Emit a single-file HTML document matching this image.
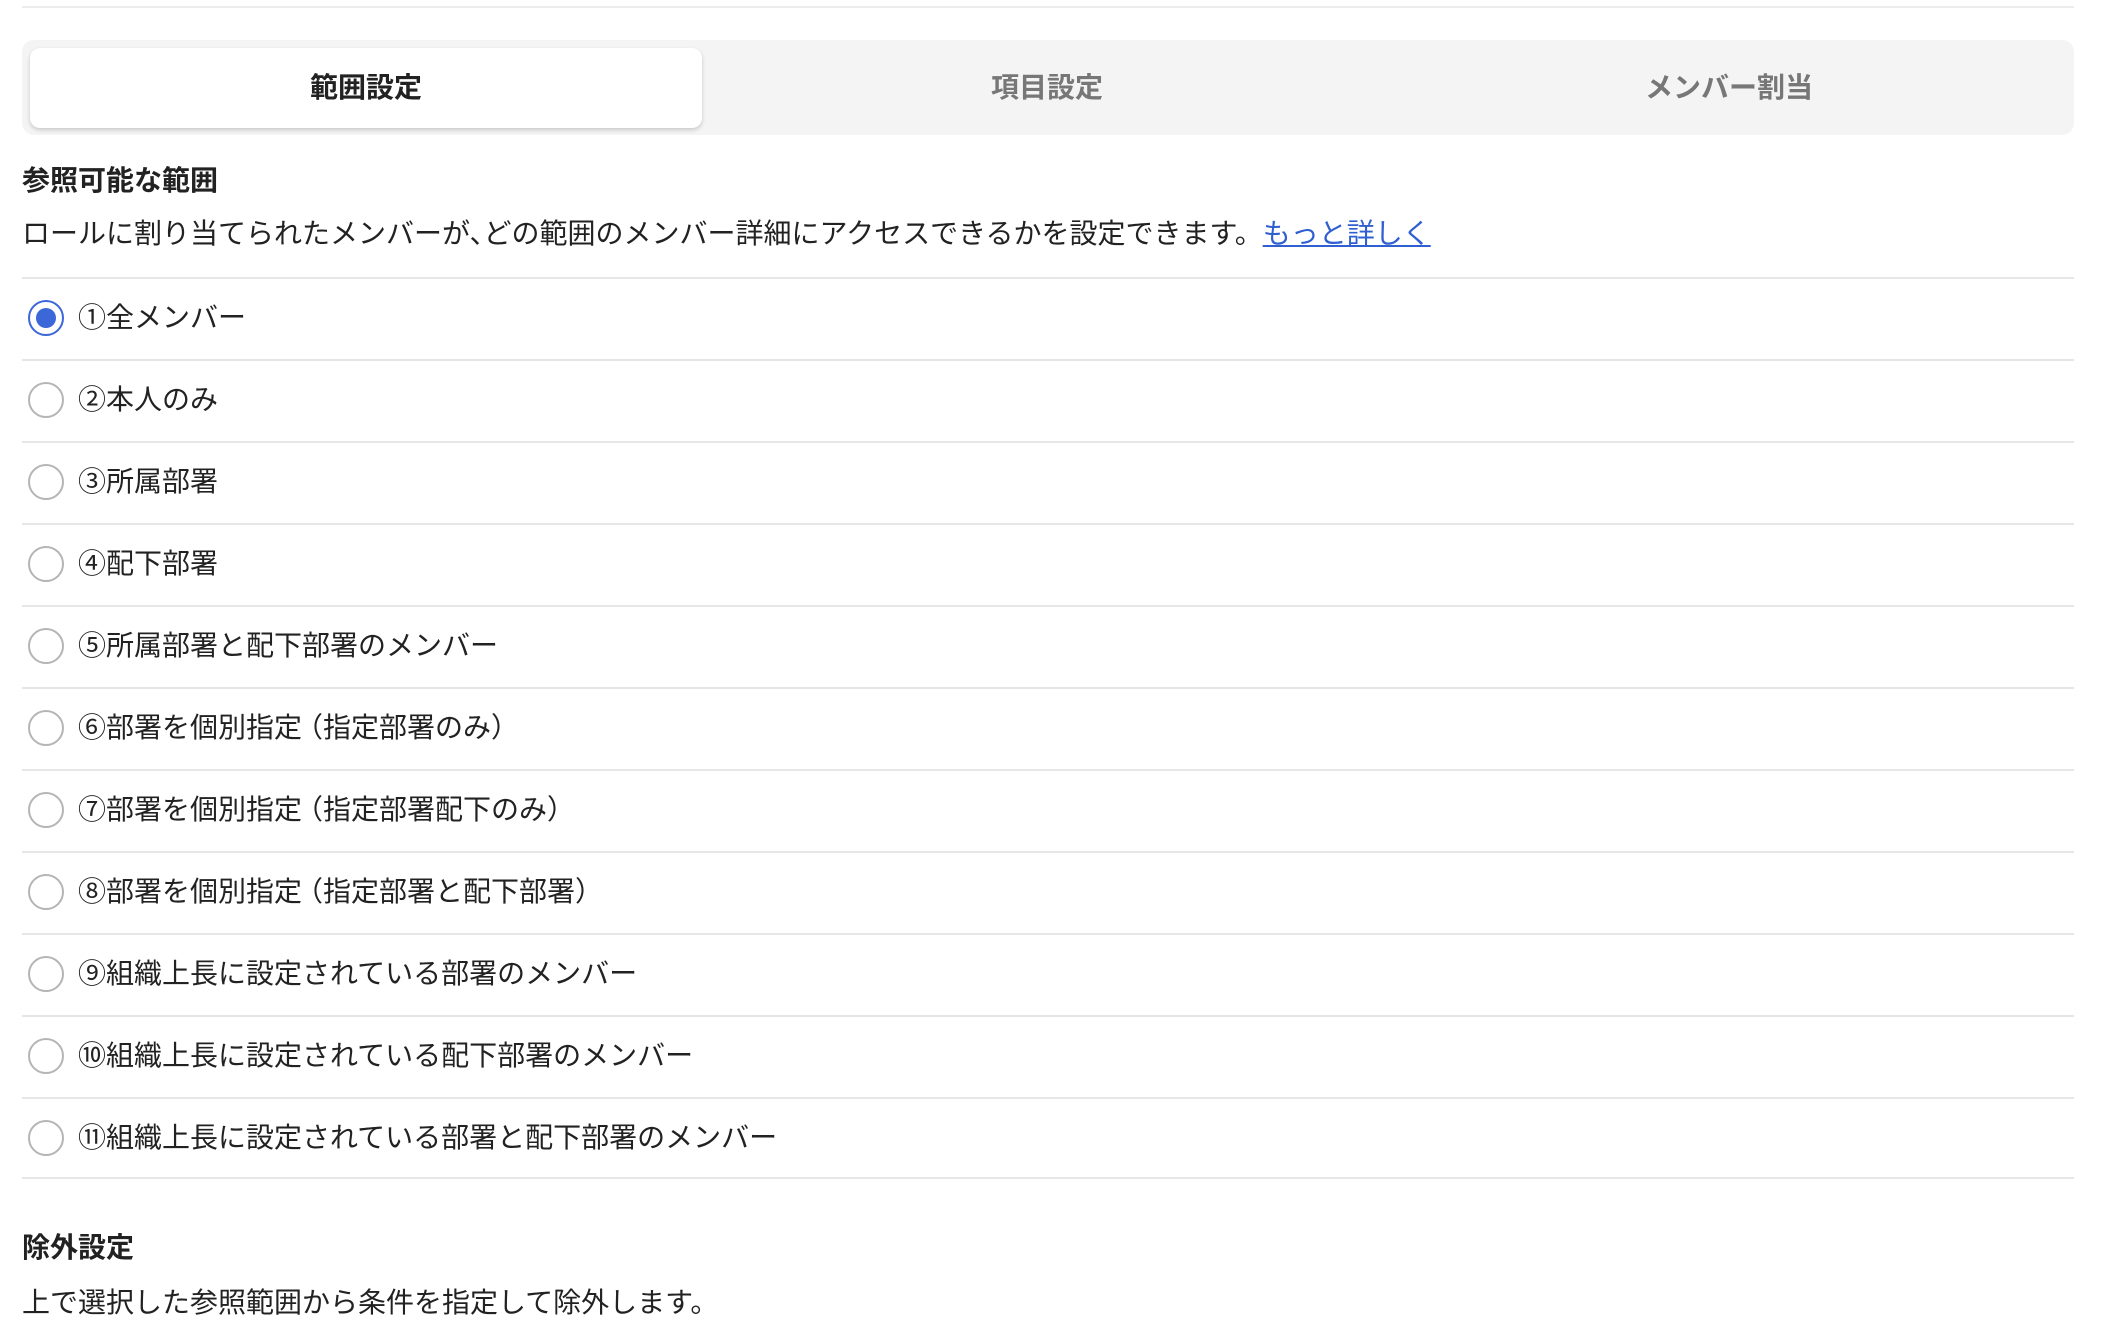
<!DOCTYPE html>
<html><head><meta charset="utf-8"><style>
body{margin:0;width:2102px;height:1330px;background:#fff;position:relative;overflow:hidden;font-family:"Liberation Sans","Noto Sans CJK JP",sans-serif;color:#222;}
.a{position:absolute;white-space:nowrap;}
.line{position:absolute;left:22px;width:2052px;height:2px;background:#e6e6e6;}
.bar{position:absolute;left:22px;top:40px;width:2052px;height:95px;background:#f4f4f4;border-radius:12px;}
.tab{position:absolute;top:48px;height:80px;line-height:80px;text-align:center;font-size:28px;font-weight:bold;color:#777;width:672px;}
.act{background:#fff;color:#222;border-radius:10px;box-shadow:0 2px 4px rgba(0,0,0,.18);}
.r{position:absolute;left:28px;width:32px;height:32px;border:2.5px solid #b5b5b5;border-radius:50%;}
.r.on{border-color:#3b67d9;}
.r.on::after{content:"";position:absolute;left:6px;top:6px;width:20px;height:20px;border-radius:50%;background:#3b67d9;}
.t{position:absolute;left:78px;font-size:28px;line-height:40px;white-space:nowrap;}
.h{font-size:28px;font-weight:bold;}
.d{font-size:28px;}
.pl{margin-left:-7px}.pr{margin-right:-7px}.cm{margin-right:-14px}
</style></head><body>
<div class="line" style="top:6px;left:22px;height:2px;background:#ececec"></div>
<div class="bar"></div>
<div class="tab act" style="left:30px">範囲設定</div>
<div class="tab" style="left:711px">項目設定</div>
<div class="tab" style="left:1393px">メンバー割当</div>
<div class="a h" style="left:22px;top:159px">参照可能な範囲</div>
<div class="a d" style="left:22px;top:212px">ロールに割り当てられたメンバーが<span class="cm">、</span>どの範囲のメンバー詳細にアクセスできるかを設定できます。<span style="color:#2f5fd0;text-decoration:underline">もっと詳しく</span></div>
<div class="line" style="top:277px"></div>
<div class="r on" style="top:300px"></div><div class="t" style="top:298px">①全メンバー</div>
<div class="line" style="top:359px"></div>
<div class="r" style="top:382px"></div><div class="t" style="top:380px">②本人のみ</div>
<div class="line" style="top:441px"></div>
<div class="r" style="top:464px"></div><div class="t" style="top:462px">③所属部署</div>
<div class="line" style="top:523px"></div>
<div class="r" style="top:546px"></div><div class="t" style="top:544px">④配下部署</div>
<div class="line" style="top:605px"></div>
<div class="r" style="top:628px"></div><div class="t" style="top:626px">⑤所属部署と配下部署のメンバー</div>
<div class="line" style="top:687px"></div>
<div class="r" style="top:710px"></div><div class="t" style="top:708px">⑥部署を個別指定<span class="pl">（</span>指定部署のみ<span class="pr">）</span></div>
<div class="line" style="top:769px"></div>
<div class="r" style="top:792px"></div><div class="t" style="top:790px">⑦部署を個別指定<span class="pl">（</span>指定部署配下のみ<span class="pr">）</span></div>
<div class="line" style="top:851px"></div>
<div class="r" style="top:874px"></div><div class="t" style="top:872px">⑧部署を個別指定<span class="pl">（</span>指定部署と配下部署<span class="pr">）</span></div>
<div class="line" style="top:933px"></div>
<div class="r" style="top:956px"></div><div class="t" style="top:954px">⑨組織上長に設定されている部署のメンバー</div>
<div class="line" style="top:1015px"></div>
<div class="r" style="top:1038px"></div><div class="t" style="top:1036px">⑩組織上長に設定されている配下部署のメンバー</div>
<div class="line" style="top:1097px"></div>
<div class="r" style="top:1120px"></div><div class="t" style="top:1118px">⑪組織上長に設定されている部署と配下部署のメンバー</div>
<div class="line" style="top:1177px"></div>
<div class="a h" style="left:22px;top:1226px">除外設定</div>
<div class="a d" style="left:22px;top:1281px">上で選択した参照範囲から条件を指定して除外します。</div>
</body></html>
